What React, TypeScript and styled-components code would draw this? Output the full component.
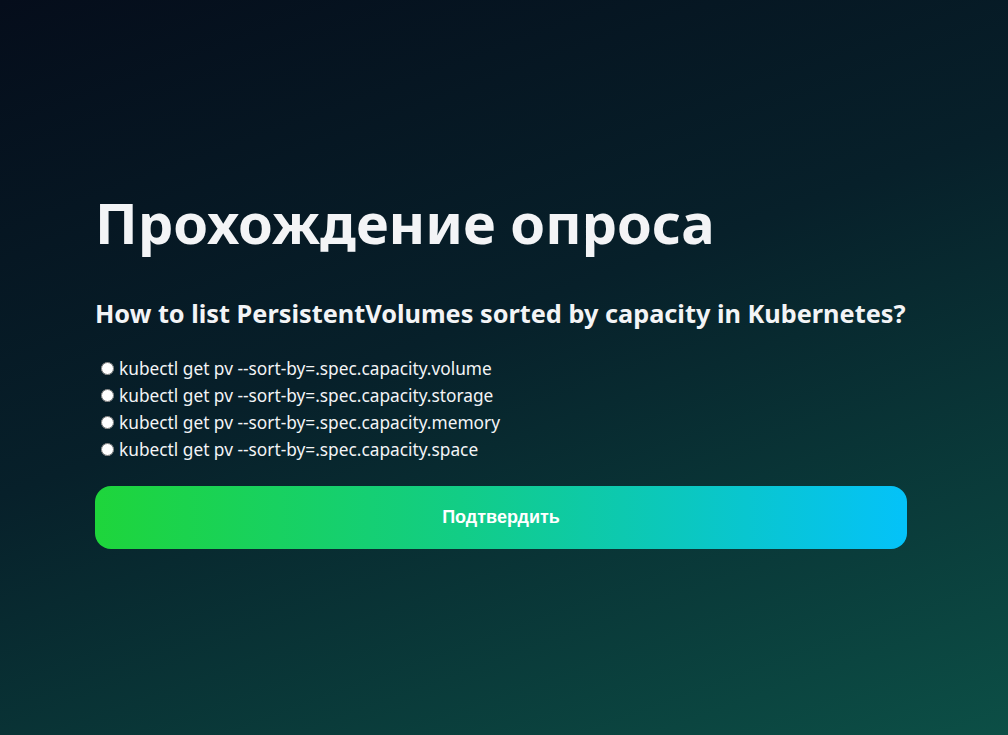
import styled, { createGlobalStyle } from "styled-components";

const GlobalStyle = createGlobalStyle`
  html, body {
    margin: 0;
    padding: 0;
  }
  body {
    font-family: "Noto Sans", "Open Sans", sans-serif;
  }
`;

const Page = styled.div`
  min-height: 735px;
  padding: 3px 6px 0 0;
  box-sizing: border-box;
  background: linear-gradient(160deg, #050d1b 0%, #07202a 45%, #0c4f46 100%);
  color: #f3f4f6;
  display: flex;
  align-items: center;
  justify-content: center;
`;

const Card = styled.div`
  width: 812px;
  display: flex;
  flex-direction: column;
`;

const Title = styled.h1`
  font-size: 56px;
  font-weight: 700;
  margin: 0 0 41px;
  line-height: 1.2;
`;

const Question = styled.h2`
  font-size: 25.3px;
  font-weight: 700;
  margin: 0 0 25px;
  line-height: 1.3;
`;

const Options = styled.div`
  display: flex;
  flex-direction: column;
  margin-bottom: 23px;
`;

const Option = styled.label`
  display: flex;
  align-items: center;
  gap: 5px;
  font-size: 17.3px;
  line-height: 27px;
  cursor: pointer;

  input {
    margin: 0 0 0 6px;
    width: 13px;
    height: 13px;
  }
`;

const SubmitButton = styled.button`
  height: 63px;
  border: none;
  border-radius: 16px;
  background: linear-gradient(90deg, #1ed53b 0%, #12cd86 45%, #04c2f9 100%);
  color: #fff;
  font-family: "Liberation Sans", Arial, sans-serif;
  font-size: 18px;
  font-weight: 700;
  cursor: pointer;
`;

const answers = [
  "kubectl get pv --sort-by=.spec.capacity.volume",
  "kubectl get pv --sort-by=.spec.capacity.storage",
  "kubectl get pv --sort-by=.spec.capacity.memory",
  "kubectl get pv --sort-by=.spec.capacity.space",
];

export default function App() {
  return (
    <Page>
      <GlobalStyle />
      <Card>
        <Title>Прохождение опроса</Title>
        <Question>How to list PersistentVolumes sorted by capacity in Kubernetes?</Question>
        <Options>
          {answers.map((a) => (
            <Option key={a}>
              <input type="radio" name="answer" value={a} />
              {a}
            </Option>
          ))}
        </Options>
        <SubmitButton>Подтвердить</SubmitButton>
      </Card>
    </Page>
  );
}
